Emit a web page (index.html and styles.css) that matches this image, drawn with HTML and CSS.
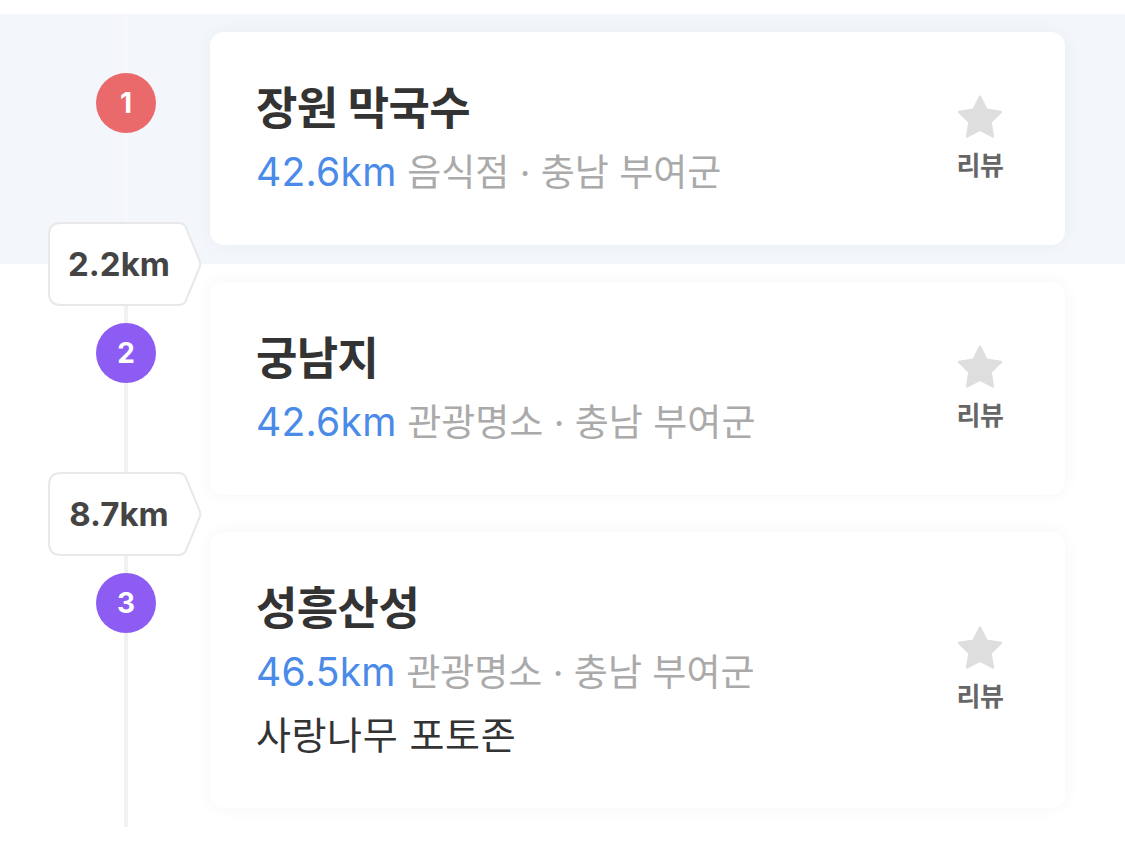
FILE: index.html
```html
<!DOCTYPE html>
<html lang="ko">
<head>
<meta charset="utf-8">
<title>여행 코스</title>
<link rel="stylesheet" href="styles.css">
</head>
<body>
<div class="page">
  <ol class="route">
    <li class="stop stop--active">
      <div class="gutter"><span class="badge badge--red">1</span></div>
      <div class="card">
        <div class="info">
          <div class="title">장원 막국수</div>
          <div class="meta"><span class="dist">42.6km</span> 음식점 · 충남 부여군</div>
        </div>
        <div class="review">
          <svg class="star" viewBox="1 1.2 22 21" width="46" height="44" aria-hidden="true"><polygon points="12 2 15.09 8.26 22 9.27 17 14.14 18.18 21.02 12 17.77 5.82 21.02 7 14.14 2 9.27 8.91 8.26"/></svg>
          <span class="review-label">리뷰</span>
        </div>
      </div>
    </li>
    <li class="stop">
      <div class="leg">
        <svg class="leg-shape" viewBox="0 0 154 84" width="154" height="84" aria-hidden="true"><path d="M13 1 H131 Q135 1 137.5 4.5 L151.5 38.5 Q153 42 151.5 45.5 L137.5 79.5 Q135 83 131 83 H13 Q1 83 1 71 V13 Q1 1 13 1 Z"/></svg>
        <span class="leg-text">2.2km</span>
      </div>
      <div class="gutter"><span class="badge badge--purple">2</span></div>
      <div class="card">
        <div class="info">
          <div class="title">궁남지</div>
          <div class="meta"><span class="dist">42.6km</span> 관광명소 · 충남 부여군</div>
        </div>
        <div class="review">
          <svg class="star" viewBox="1 1.2 22 21" width="46" height="44" aria-hidden="true"><polygon points="12 2 15.09 8.26 22 9.27 17 14.14 18.18 21.02 12 17.77 5.82 21.02 7 14.14 2 9.27 8.91 8.26"/></svg>
          <span class="review-label">리뷰</span>
        </div>
      </div>
    </li>
    <li class="stop">
      <div class="leg">
        <svg class="leg-shape" viewBox="0 0 154 84" width="154" height="84" aria-hidden="true"><path d="M13 1 H131 Q135 1 137.5 4.5 L151.5 38.5 Q153 42 151.5 45.5 L137.5 79.5 Q135 83 131 83 H13 Q1 83 1 71 V13 Q1 1 13 1 Z"/></svg>
        <span class="leg-text">8.7km</span>
      </div>
      <div class="gutter"><span class="badge badge--purple">3</span></div>
      <div class="card">
        <div class="info">
          <div class="title">성흥산성</div>
          <div class="meta"><span class="dist">46.5km</span> 관광명소 · 충남 부여군</div>
          <div class="note">사랑나무 포토존</div>
        </div>
        <div class="review">
          <svg class="star" viewBox="1 1.2 22 21" width="46" height="44" aria-hidden="true"><polygon points="12 2 15.09 8.26 22 9.27 17 14.14 18.18 21.02 12 17.77 5.82 21.02 7 14.14 2 9.27 8.91 8.26"/></svg>
          <span class="review-label">리뷰</span>
        </div>
      </div>
    </li>
  </ol>
</div>
</body>
</html>
```

FILE: styles.css
```css
* { box-sizing: border-box; }

html, body {
  margin: 0;
  padding: 0;
  background: #ffffff;
}

body {
  font-family: "Inter", "Noto Sans CJK KR", "Noto Sans", sans-serif;
  color: #333333;
  width: 1125px;
  height: 843px;
  overflow: hidden;
}

.page {
  padding-top: 14px;
}

.route {
  list-style: none;
  margin: 0;
  padding: 0;
}

.stop {
  position: relative;
  display: flex;
  align-items: flex-start;
  padding: 18px 60px 19px 0;
  background: linear-gradient(#f1f1f2, #f1f1f2) no-repeat 124px 0 / 4px 100%;
}

.stop--active {
  background:
    linear-gradient(#f7f8fb, #f7f8fb) no-repeat 124px 0 / 4px 100%,
    #f3f6fa;
}

.gutter {
  flex: 0 0 210px;
  padding: 41px 0 0 96px;
}

.badge {
  position: relative;
  display: flex;
  align-items: center;
  justify-content: center;
  width: 60px;
  height: 60px;
  border-radius: 50%;
  color: #ffffff;
  font-family: "Inter", sans-serif;
  font-weight: 700;
  font-size: 28px;
  line-height: 1;
}

.badge--red { background: #ea6a6c; }
.badge--purple { background: #8c5cf3; }

.card {
  flex: 1;
  display: flex;
  align-items: center;
  background: #ffffff;
  border-radius: 14px;
  box-shadow: 0 0 18px rgba(0, 0, 0, 0.045);
  padding: 45px 45px 41px 46px;
}

.info {
  flex: 1;
  min-width: 0;
}

.title {
  font-size: 45px;
  font-weight: 700;
  letter-spacing: -0.6px;
  line-height: 63px;
  color: #333333;
}

.meta {
  font-size: 37px;
  letter-spacing: 0;
  line-height: 63px;
  color: #aaaaaa;
  white-space: nowrap;
}

.dist {
  font-size: 39px;
  letter-spacing: 0.3px;
  color: #4a8ae9;
}

.note {
  font-size: 38px;
  letter-spacing: 0.6px;
  line-height: 63px;
  color: #333333;
}

.review {
  flex: 0 0 80px;
  display: flex;
  flex-direction: column;
  align-items: center;
  margin-top: -4px;
}

.star {
  display: block;
  fill: #dedede;
  stroke: #dedede;
  stroke-width: 1.2;
  stroke-linejoin: round;
}

.review-label {
  margin-top: 10px;
  font-size: 26px;
  font-weight: 700;
  line-height: 34px;
  letter-spacing: -0.5px;
  color: #666666;
}

.leg {
  position: absolute;
  left: 48px;
  top: -42px;
  width: 154px;
  height: 84px;
  display: flex;
  align-items: center;
  padding-left: 6px;
  z-index: 2;
}

.leg-shape {
  position: absolute;
  left: 0;
  top: 0;
  fill: #ffffff;
  stroke: #e8e8e8;
  stroke-width: 2;
}

.leg-text {
  position: relative;
  width: 130px;
  text-align: center;
  font-family: "Inter", sans-serif;
  font-size: 33px;
  font-weight: 700;
  letter-spacing: 0;
  color: #444444;
}
```
